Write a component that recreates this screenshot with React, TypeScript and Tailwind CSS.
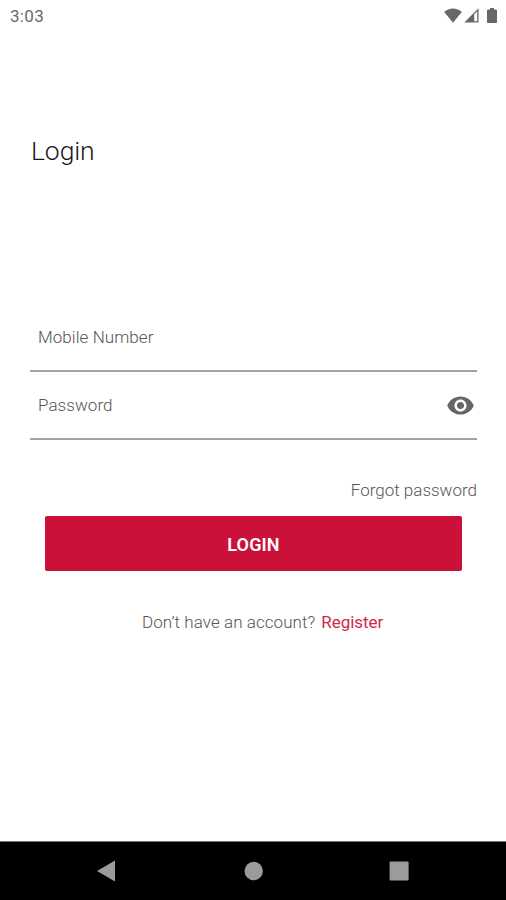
import { useState } from "react";

function StatusBar() {
  return (
    <header className="flex h-8 shrink-0 items-center pl-[10px] pr-[9px] text-[#686868]">
      <span className="text-[17px] leading-8 tracking-[0.3px]">3:03</span>
      <div className="mb-[2px] ml-auto flex items-center">
        <svg className="h-[15px] w-[18px]" viewBox="0 0 18 15" fill="currentColor" aria-hidden="true">
          <path d="M9 14.8 0.2 3.9C2.6 1.7 5.7.4 9 .4s6.4 1.3 8.8 3.5z" />
        </svg>
        <svg className="ml-[2px] h-[15px] w-[15px]" viewBox="0 0 15 15" fill="currentColor" aria-hidden="true">
          <path d="M.3 14.5 14.5.3v14.2zM10.2 6.2v7.1h3V3.2z" fillRule="evenodd" />
        </svg>
        <svg className="ml-2 h-[15px] w-[10px]" viewBox="0 0 10 15" fill="currentColor" aria-hidden="true">
          <path d="M3 0h4v1.6h2.2c.5 0 .8.3.8.8v11.8c0 .5-.3.8-.8.8H.8c-.5 0-.8-.3-.8-.8V2.4c0-.5.3-.8.8-.8H3z" />
        </svg>
      </div>
    </header>
  );
}

function Field({ label, children }: { label: string; children?: React.ReactNode }) {
  return (
    <div className="flex h-[68px] items-center border-b-2 border-[#a2a2a2] pl-2 pr-[2px]">
      <span className="text-[17px] font-light leading-6 tracking-[0.06px] text-[#555555]">{label}</span>
      {children}
    </div>
  );
}

function NavBar() {
  return (
    <nav className="h-[59px] shrink-0 border-t border-[#777777] bg-black text-[#9b9b9b]">
      <svg className="h-[58px] w-full" viewBox="0 0 506 58" fill="currentColor" aria-hidden="true">
        <path d="M97 29 115 18.6v20.8z" />
        <circle cx="253.7" cy="29" r="9.2" />
        <rect x="389.6" y="19.6" width="19" height="19" rx="1" />
      </svg>
    </nav>
  );
}

export default function App() {
  const [visible, setVisible] = useState(false);

  return (
    <div className="flex h-[900px] w-[506px] flex-col bg-white font-['Roboto','Liberation_Sans',sans-serif]">
      <StatusBar />
      <main className="flex flex-1 flex-col pl-[30px] pr-[29px]">
        <h1 className="mt-[100px] pl-px text-[26.5px] font-light leading-[38px] tracking-[-0.1px] text-[#18181f]">
          Login
        </h1>
        <form className="mt-[134px] flex flex-col" onSubmit={(e) => e.preventDefault()}>
          <Field label="Mobile Number" />
          <Field label="Password">
            <button
              type="button"
              onClick={() => setVisible(!visible)}
              aria-pressed={visible}
              aria-label="Show password"
              className="ml-auto text-[#666666]"
            >
              <svg className="h-[29px] w-[29px]" viewBox="0 0 24 24" fill="currentColor">
                <path d="M12 4.5C7 4.5 2.73 7.61 1 12c1.73 4.39 6 7.5 11 7.5s9.27-3.11 11-7.5c-1.73-4.39-6-7.5-11-7.5zM12 17c-2.76 0-5-2.24-5-5s2.24-5 5-5 5 2.24 5 5-2.24 5-5 5zm0-8c-1.66 0-3 1.34-3 3s1.34 3 3 3 3-1.34 3-3-1.34-3-3-3z" />
              </svg>
            </button>
          </Field>
          <a href="#" className="mt-[38px] self-end text-[17px] font-light leading-6 text-[#555555]">
            Forgot password
          </a>
          <button
            type="submit"
            className="mx-[15px] mt-[14px] h-[55px] rounded-[2px] bg-[#cb1139] pt-[2px] text-[18px] font-semibold tracking-[0.1px] text-white"
          >
            LOGIN
          </button>
        </form>
        <p className="mt-[39px] flex gap-[6px] pl-[112px] text-[17px] font-light leading-6 tracking-[0.06px] text-[#555555]">
          <span>Don’t have an account?</span>
          <a href="#" className="font-normal tracking-[-0.05px] text-[#d32549]">Register</a>
        </p>
      </main>
      <NavBar />
    </div>
  );
}
